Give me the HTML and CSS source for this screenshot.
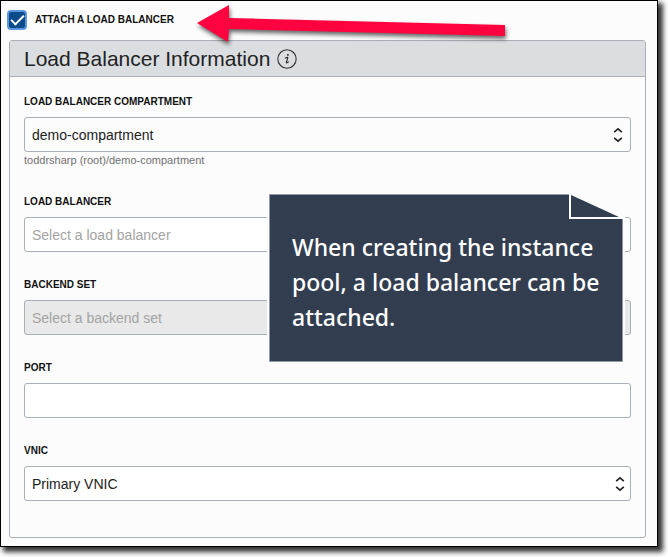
FILE: index.html
```html
<!DOCTYPE html>
<html lang="en">
<head>
    <meta charset="UTF-8">
    <meta name="viewport" content="width=device-width, initial-scale=1.0">
    <title>Attach a Load Balancer</title>
    <link rel="stylesheet" href="styles.css">
</head>
<body>
    <main class="sheet">
        <div class="attach">
            <input type="checkbox" id="attach" checked>
            <label for="attach">ATTACH A LOAD BALANCER</label>
        </div>

        <section class="panel">
            <header class="panel-header">
                <h1>Load Balancer Information</h1>
                <svg class="info" viewBox="0 0 20 20" aria-hidden="true">
                    <circle cx="10" cy="10" r="9.2" fill="none" stroke="#333" stroke-width="1.1"/>
                    <circle cx="10.9" cy="5.9" r="0.9" fill="#222"/>
                    <path d="M8.3 9.1c.9-.6 1.6-.9 2.1-.9.4 0 .5.3.3.9l-1.3 4c-.2.6 0 .8.3.8.5 0 1.1-.4 1.7-1" fill="none" stroke="#222" stroke-width="1.1" stroke-linecap="round"/>
                </svg>
            </header>

            <form class="fields">
                <div class="field">
                    <label for="compartment">LOAD BALANCER COMPARTMENT</label>
                    <div class="select tinted">
                        <select id="compartment">
                            <option>demo-compartment</option>
                        </select>
                        <svg viewBox="0 0 10 16" aria-hidden="true"><path d="M1.2 5.2L5 1.8 8.8 5.2M1.2 10.8L5 14.2 8.8 10.8"/></svg>
                    </div>
                    <small>toddrsharp (root)/demo-compartment</small>
                </div>
                <div class="field">
                    <label for="balancer">LOAD BALANCER</label>
                    <div class="select">
                        <select id="balancer" class="empty">
                            <option>Select a load balancer</option>
                        </select>
                    </div>
                </div>
                <div class="field">
                    <label for="backend">BACKEND SET</label>
                    <div class="select">
                        <select id="backend" class="empty" disabled>
                            <option>Select a backend set</option>
                        </select>
                    </div>
                </div>
                <div class="field">
                    <label for="port">PORT</label>
                    <input type="text" id="port">
                </div>
                <div class="field">
                    <label for="vnic">VNIC</label>
                    <div class="select">
                        <select id="vnic">
                            <option>Primary VNIC</option>
                        </select>
                        <svg viewBox="0 0 10 16" aria-hidden="true"><path d="M1.2 5.2L5 1.8 8.8 5.2M1.2 10.8L5 14.2 8.8 10.8"/></svg>
                    </div>
                </div>
            </form>
        </section>

        <!-- Annotations laid over the form -->
        <svg class="arrow" viewBox="0 0 308 38" aria-hidden="true">
            <path d="M0 18L32 0V13L308 20V31L32 24L31 37Z" fill="#ff0340"/>
        </svg>

        <aside class="note">
            <svg viewBox="0 0 358 171" preserveAspectRatio="none" aria-hidden="true">
                <path d="M0 0H304L358 25V171H0Z" fill="#fcfcfc"/>
                <path d="M2.5 2.5H302V27H355.500V169.500H2.500Z" fill="#323d4f"/>
                <path d="M302 2.500H2.500V169.500H355.500V27" fill="none" stroke="#9299a3" stroke-width="1"/>
                <path d="M304 3L352 25H304Z" fill="#323d4f"/>
            </svg>
            <p>When creating the instance pool, a load balancer can be attached.</p>
        </aside>
    </main>
</body>
</html>
```

FILE: styles.css
```css
* {
    box-sizing: border-box;
}

body {
    margin: 0;
    padding: 0 10px 10px 0;
    background-color: #fff;
    font-family: "Liberation Sans", Arial, sans-serif;
    color: #222;
}

.sheet {
    position: relative;
    padding: 8px 11px 8px 8px;
    background-color: #fcfcfc;
    border: 1px solid #000;
    box-shadow: 4px 4px 5px 1px rgba(0, 0, 0, 0.8);
}

.attach {
    display: flex;
    align-items: center;
    gap: 10px;
    height: 22px;
    margin-bottom: 9px;
}

.attach input {
    appearance: none;
    width: 16px;
    height: 16px;
    margin: 0;
    border-radius: 2px;
    background-color: #0b4a8b;
    box-shadow: 0 0 0 2px #5c97dc;
    display: grid;
    place-items: center;
}

.attach input:checked::after {
    content: "";
    width: 11px;
    height: 5px;
    margin-bottom: 4px;
    border: solid #fff;
    border-width: 0 0 2px 2px;
    transform: rotate(-45deg);
}

.attach label,
.field label {
    font-size: 10px;
    font-weight: bold;
    line-height: 18px;
    color: #111;
}

.panel {
    border: 1px solid #a9afb9;
    border-radius: 3px;
}

.panel-header {
    display: flex;
    align-items: center;
    gap: 7px;
    height: 36px;
    padding: 0 14px;
    background-color: #dadee1;
    border-bottom: 1px solid #a9afb9;
}

.panel-header h1 {
    margin: 0;
    font-size: 21px;
    font-weight: normal;
}

.info {
    width: 20px;
    height: 20px;
}

.fields {
    display: flex;
    flex-direction: column;
    gap: 24px;
    padding: 16px 14px 36px;
}

.field {
    display: flex;
    flex-direction: column;
}

.field label {
    margin-bottom: 6px;
}

.field select,
.field input {
    appearance: none;
    width: 100%;
    height: 35px;
    padding: 0 7px;
    border: 1px solid #a9afb9;
    border-radius: 3px;
    background-color: #fff;
    font-family: inherit;
    font-size: 14px;
    color: #222;
}

.field .tinted select {
    background-color: #fcfcfc;
}

.field .empty {
    color: #a3a3a3;
}

.field select:disabled {
    background-color: #e9e9e9;
    opacity: 1;
}

.select {
    position: relative;
}

.select svg {
    position: absolute;
    top: 10px;
    right: 6px;
    width: 10px;
    height: 16px;
    fill: none;
    stroke: #222;
    stroke-width: 1.6;
    pointer-events: none;
}

.tinted svg {
    right: 8px;
}

.field small {
    font-size: 11px;
    line-height: 17px;
    color: #707070;
}

.arrow {
    position: absolute;
    top: 4px;
    left: 196px;
    width: 308px;
    height: 38px;
    overflow: visible;
    filter: drop-shadow(1px 3px 2px rgba(0, 0, 0, 0.6));
}

.note {
    position: absolute;
    top: 191px;
    right: 32px;
    width: 358px;
    padding: 38px 20px 28px 25px;
}

.note svg {
    position: absolute;
    top: 0;
    left: 0;
    width: 100%;
    height: 100%;
}

.note p {
    position: relative;
    margin: 0;
    font-family: "Noto Sans", "Open Sans", sans-serif;
    font-size: 23px;
    font-weight: 500;
    line-height: 35px;
    color: #fff;
}
```
